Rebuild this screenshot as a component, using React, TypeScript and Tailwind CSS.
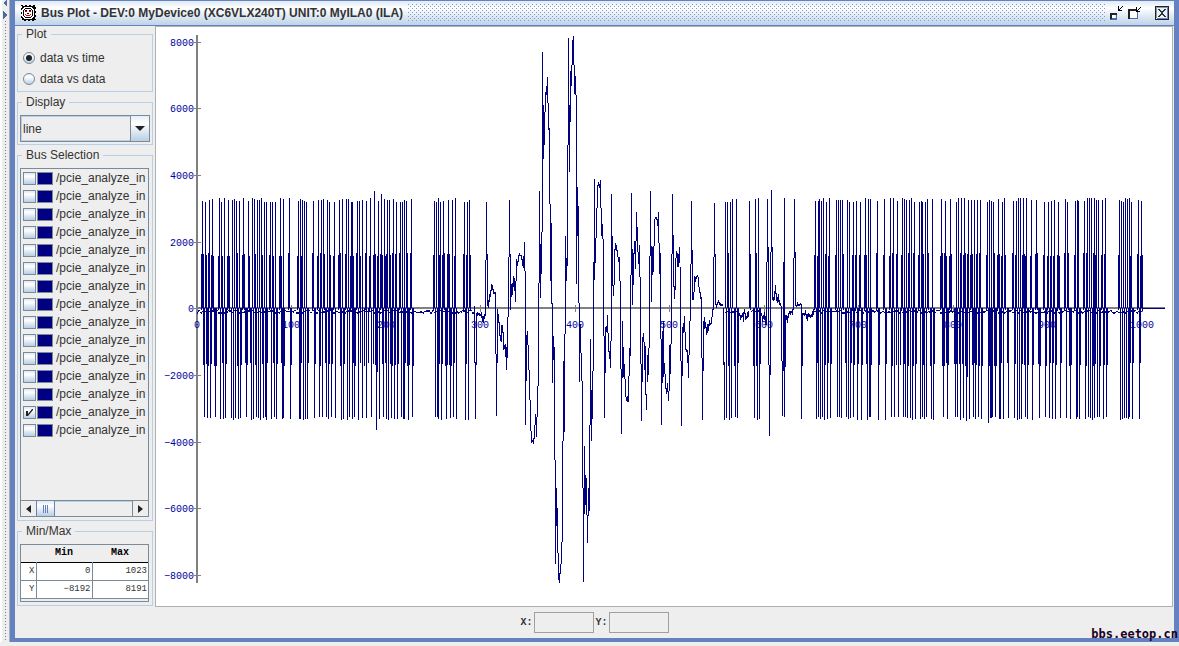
import React, { useState } from "react";

const BUS_COUNT = 15;

const Y_TICKS = [8000, 6000, 4000, 2000, 0, -2000, -4000, -6000, -8000];
const X_TICKS = [0, 100, 200, 300, 400, 500, 600, 700, 800, 900, 1000];

const AXIS_X = 197;
const AXIS_Y = 308;

// columns that reach the full positive swing
const PEAKS = [
  202, 205, 209, 212, 219, 221, 224, 228, 232, 234, 236, 239, 243, 248, 252, 254, 257, 259, 261, 264, 266, 270, 272,
  275, 280, 283, 289, 298, 300, 302, 304, 306, 313, 318, 321, 323, 327, 329, 334, 339, 342, 346, 348, 351, 352, 357,
  359, 362, 366, 370, 378, 384, 387, 389, 393, 396, 400, 402, 404, 406, 411, 434, 436, 438, 440, 443, 448, 452, 455,
  464, 467, 469, 725, 727, 730, 732, 736, 749, 755, 758, 815, 818, 819, 821, 823, 826, 829, 836, 838, 840, 842, 847,
  849, 853, 856, 860, 865, 868, 870, 877, 884, 890, 893, 897, 902, 904, 906, 909, 911, 914, 919, 921, 922, 925, 927,
  932, 941, 945, 950, 956, 958, 961, 964, 968, 971, 974, 977, 980, 987, 989, 991, 993, 998, 1002, 1004, 1013, 1016,
  1018, 1020, 1023, 1026, 1031, 1036, 1044, 1048, 1051, 1054, 1058, 1065, 1067, 1075, 1077, 1078, 1084, 1087, 1089,
  1091, 1094, 1096, 1098, 1102, 1105, 1119, 1121, 1123, 1125, 1127, 1129, 1131, 1138, 1141,
];

// columns that reach the full negative swing
const DIPS = [
  204, 207, 210, 215, 220, 223, 225, 231, 233, 235, 238, 240, 246, 251, 253, 256, 258, 260, 263, 265, 266, 271, 274,
  276, 282, 283, 290, 299, 300, 303, 305, 307, 314, 319, 322, 326, 328, 331, 335, 341, 343, 347, 349, 352, 354, 358,
  362, 366, 371, 379, 383, 386, 388, 391, 394, 397, 401, 403, 404, 408, 412, 435, 437, 438, 441, 446, 450, 453, 456,
  465, 468, 726, 729, 731, 735, 737, 754, 757, 759, 816, 818, 820, 822, 824, 827, 830, 837, 839, 841, 846, 848, 850,
  853, 857, 861, 867, 869, 870, 878, 885, 891, 894, 898, 903, 905, 907, 910, 912, 915, 920, 922, 924, 926, 931, 933,
  943, 947, 955, 957, 960, 963, 969, 973, 975, 978, 981, 991, 995, 999, 990, 992, 1000, 1003, 1008, 1014, 1017, 1019,
  1021, 1025, 1027, 1032, 1039, 1045, 1049, 1052, 1055, 1060, 1066, 1070, 1076, 1077, 1079, 1085, 1088, 1090, 1092,
  1094, 1097, 1099, 1103, 1106, 1120, 1122, 1124, 1126, 1128, 1129, 1132, 1139,
];

const HALF_PEAKS = [
  201, 203, 206, 208, 211, 213, 218, 222, 227, 229, 237, 242, 244, 249, 255, 262, 269, 273, 279, 281, 288, 297, 301,
  312, 317, 320, 324, 330, 333, 338, 340, 345, 350, 353, 356, 360, 365, 369, 373, 375, 377, 380, 382, 385, 386, 390,
  392, 395, 399, 407, 410, 433, 439, 442, 444, 447, 449, 454, 463, 466, 470, 728, 750, 756, 814, 817, 825, 828, 835,
  843, 852, 855, 859, 864, 866, 876, 883, 889, 892, 896, 901, 908, 913, 918, 923, 928, 940, 942, 944, 946, 949, 951,
  960, 963, 965, 967, 970, 972, 976, 979, 986, 994, 997, 999, 1001, 1005, 1012, 1015, 1022, 1024, 1025, 1030, 1035,
  1037, 1043, 1047, 1050, 1053, 1057, 1059, 1064, 1068, 1074, 1083, 1086, 1093, 1095, 1101, 1104, 1118, 1130, 1137,
  1140, 1142,
];

const HALF_DIPS = [
  203, 206, 208, 211, 214, 216, 222, 226, 237, 241, 245, 247, 250, 255, 262, 267, 273, 277, 281, 284, 291, 301, 308,
  315, 320, 325, 329, 332, 340, 344, 353, 355, 360, 364, 368, 373, 375, 382, 385, 390, 392, 395, 398, 405, 407, 409,
  413, 439, 442, 445, 447, 449, 451, 454, 466, 723, 728, 734, 738, 753, 756, 760, 817, 825, 828, 831, 845, 851, 854,
  858, 862, 866, 871, 879, 886, 892, 896, 900, 904, 908, 913, 916, 923, 930, 934, 942, 944, 946, 948, 954, 956, 959,
  962, 965, 972, 974, 976, 979, 982, 989, 992, 994, 996, 991, 1001, 1007, 1015, 1022, 1024, 1028, 1033, 1038, 1040,
  1046, 1050, 1053, 1056, 1061, 1069, 1071, 1077, 1080, 1086, 1093, 1095, 1100, 1104, 1107, 1130, 1133, 1140,
];

// [x, top, bottom] of the columns that stand out of the regular pattern
const COLUMNS: [number, number, number][] = [
  [374, 191, 308], [376, 308, 430], [377, 259, 372], [381, 194, 308], [966, 308, 421], [967, 269, 377], [988, 308, 423],
  [474, 306, 363], [475, 362, 419], [476, 313, 365], [477, 312, 316], [478, 313, 315], [479, 313, 316], [480, 314, 316],
  [481, 312, 318], [482, 316, 322], [483, 316, 323], [484, 314, 319], [485, 260, 316], [486, 202, 260], [487, 254, 306],
  [488, 300, 308], [489, 294, 302], [490, 290, 297], [491, 284, 291], [492, 285, 290], [493, 289, 294], [494, 292, 294],
  [495, 292, 354], [496, 354, 416], [497, 309, 363], [498, 314, 323], [499, 322, 336], [500, 335, 341], [501, 325, 342],
  [502, 325, 333], [503, 332, 350], [504, 345, 349], [505, 344, 357], [506, 347, 370], [507, 317, 358], [508, 257, 317],
  [509, 200, 257], [510, 254, 310], [511, 284, 297], [512, 283, 295], [513, 276, 287], [514, 278, 291], [515, 281, 302],
  [516, 259, 281], [517, 261, 266], [518, 255, 262], [519, 253, 256], [520, 255, 256], [521, 255, 260], [522, 259, 266],
  [523, 256, 268], [524, 242, 271], [525, 271, 425], [526, 335, 381], [527, 331, 345], [528, 345, 370], [529, 370, 400],
  [530, 400, 431], [531, 431, 443], [532, 440, 442], [533, 438, 444], [534, 425, 439], [535, 414, 425], [536, 417, 437],
  [537, 386, 417], [538, 283, 386], [539, 191, 283], [540, 244, 298], [541, 232, 274], [542, 52, 232], [543, 105, 159],
  [544, 112, 145], [545, 92, 112], [546, 86, 95], [547, 77, 103], [548, 103, 130], [549, 128, 204], [550, 204, 281],
  [551, 223, 304], [552, 303, 383], [553, 336, 360], [554, 347, 460], [555, 460, 564], [556, 488, 526], [557, 508, 553],
  [558, 553, 580], [559, 573, 583], [560, 564, 574], [561, 542, 564], [562, 441, 542], [563, 361, 441], [564, 334, 432],
  [565, 236, 334], [566, 258, 281], [567, 145, 266], [568, 38, 145], [569, 105, 172], [570, 71, 122], [571, 65, 86],
  [572, 40, 65], [573, 36, 65], [574, 65, 94], [575, 76, 95], [576, 95, 284], [577, 187, 236], [578, 206, 303],
  [579, 303, 382], [580, 324, 353], [581, 353, 381], [582, 381, 488], [583, 488, 582], [584, 446, 514], [585, 475, 505],
  [586, 478, 515], [587, 515, 543], [588, 488, 516], [589, 425, 511], [590, 339, 425], [591, 390, 441], [592, 371, 419],
  [593, 262, 371], [594, 179, 280], [595, 238, 263], [596, 208, 238], [597, 185, 208], [598, 182, 186], [599, 184, 188],
  [600, 180, 208], [601, 208, 236], [602, 224, 239], [603, 239, 336], [604, 336, 418], [605, 327, 373], [606, 326, 332],
  [607, 315, 333], [608, 333, 352], [609, 351, 359], [610, 341, 368], [611, 194, 341], [612, 236, 286], [613, 285, 296],
  [614, 249, 285], [615, 243, 250], [616, 245, 251], [617, 250, 257], [618, 257, 262], [619, 257, 281], [620, 281, 369],
  [621, 369, 434], [622, 321, 378], [623, 347, 377], [624, 364, 379], [625, 379, 397], [626, 397, 401], [627, 396, 402],
  [628, 376, 402], [629, 348, 376], [630, 275, 356], [631, 193, 275], [632, 249, 305], [633, 253, 285], [634, 241, 254],
  [635, 241, 269], [636, 212, 241], [637, 227, 252], [638, 252, 264], [639, 245, 277], [640, 277, 364], [641, 364, 421],
  [642, 337, 382], [643, 333, 342], [644, 342, 370], [645, 346, 395], [646, 394, 410], [647, 355, 382], [648, 348, 375],
  [649, 256, 348], [650, 191, 256], [651, 246, 302], [652, 247, 275], [653, 246, 272], [654, 219, 246], [655, 217, 219],
  [656, 217, 220], [657, 219, 226], [658, 212, 243], [659, 243, 274], [660, 253, 339], [661, 339, 425], [662, 331, 383],
  [663, 321, 377], [664, 363, 374], [665, 374, 389], [666, 388, 394], [667, 383, 392], [668, 391, 401], [669, 345, 391],
  [670, 344, 374], [671, 254, 344], [672, 194, 254], [673, 235, 287], [674, 286, 299], [675, 258, 290], [676, 251, 258],
  [677, 253, 267], [678, 254, 267], [679, 247, 263], [680, 267, 361], [681, 361, 426], [682, 327, 376], [683, 323, 333],
  [684, 316, 332], [685, 332, 350], [686, 349, 352], [687, 350, 363], [688, 355, 378], [689, 321, 355], [690, 264, 321],
  [691, 201, 264], [692, 250, 300], [693, 292, 300], [694, 276, 292], [695, 277, 282], [696, 276, 279], [697, 275, 277],
  [698, 277, 287], [699, 287, 293], [700, 292, 299], [701, 297, 358], [702, 358, 420], [703, 321, 371], [704, 317, 329],
  [705, 322, 328], [706, 327, 335], [707, 324, 333], [708, 324, 331], [709, 320, 326], [710, 323, 325], [711, 317, 324],
  [712, 309, 317], [713, 257, 310], [714, 203, 257], [715, 254, 305], [716, 304, 308], [717, 302, 305], [718, 300, 303],
  [719, 302, 305], [720, 303, 306], [721, 304, 306], [722, 304, 306], [724, 362, 420],
  [739, 313, 316], [740, 315, 320], [741, 315, 318], [742, 313, 317], [743, 312, 322], [744, 309, 314], [745, 313, 320],
  [746, 316, 319], [747, 312, 318], [748, 311, 317], [761, 313, 316], [762, 316, 322], [763, 315, 319], [764, 312, 320],
  [765, 316, 325], [766, 262, 325], [767, 199, 262], [768, 247, 365], [769, 365, 436], [770, 252, 375], [771, 190, 252],
  [772, 247, 300], [773, 297, 301], [774, 291, 300], [775, 285, 294], [776, 293, 301], [777, 297, 303], [778, 294, 302],
  [779, 300, 305], [780, 303, 306], [781, 306, 361], [782, 361, 416], [783, 262, 371], [784, 198, 417], [785, 315, 367],
  [786, 315, 320], [787, 316, 323], [788, 313, 318], [789, 311, 314], [790, 311, 315], [791, 311, 313], [792, 309, 315],
  [793, 258, 310], [794, 199, 258], [795, 252, 306], [796, 305, 307], [797, 302, 306], [798, 304, 306], [799, 304, 306],
  [800, 303, 305], [801, 304, 419], [802, 313, 366], [803, 313, 315], [804, 313, 316], [805, 310, 315], [806, 314, 319],
  [807, 314, 321], [808, 313, 317], [809, 314, 317], [810, 315, 318], [811, 314, 317], [812, 311, 317], [813, 309, 315],
];

// [from, to] stretches where the trace only idles around zero
const IDLE = [
  [197, 473],
  [725, 737],
  [751, 760],
  [814, 1142],
];

const jitter = (x: number, range: number) => (x * 7919 + ((x * x) % 13)) % range;

const yTick = (v: number) => Math.round(AXIS_Y + 0.4 - v / 30);
const xTick = (v: number) => Math.floor(AXIS_X + v * 0.945);

function tracePath() {
  const seg = (x: number, top: number, bottom: number) => `M${x + 0.5} ${top}V${bottom}`;
  const parts: string[] = [];
  PEAKS.forEach((x) => parts.push(seg(x, 198 + jitter(x, 5), AXIS_Y)));
  DIPS.forEach((x) => parts.push(seg(x, AXIS_Y, 420 - jitter(x, 4))));
  HALF_PEAKS.forEach((x) => parts.push(seg(x, 253 + jitter(x, 4), AXIS_Y + 2)));
  HALF_DIPS.forEach((x) => parts.push(seg(x, AXIS_Y, 366 - jitter(x, 4))));
  COLUMNS.forEach(([x, top, bottom]) => parts.push(seg(x, top, bottom)));
  IDLE.forEach(([from, to]) => {
    for (let x = from; x <= to; x++) {
      const top = 310 + jitter(x >> 1, 3);
      parts.push(seg(x, top, top + 1 + jitter(x, 2)));
    }
  });
  return parts.join("");
}

const TRACE = tracePath();

function Chart() {
  return (
    <svg
      viewBox="156 27 1016 579"
      className="block h-full w-full"
      role="img"
      aria-label="Bus plot"
      shapeRendering="crispEdges"
    >
      <g fill="#808080">
        <rect x="196" y="35" width="2" height="548" />
        <rect x="197" y="307" width="968" height="2" />
        {Y_TICKS.map((v) => (
          <rect key={v} x="194" y={yTick(v)} width="7" height="1" />
        ))}
        {X_TICKS.map((v) => (
          <rect key={v} x={xTick(v)} y="305" width="1" height="7" />
        ))}
      </g>
      <g fill="#0000a0" className="font-['Liberation_Mono',monospace] text-[10px]">
        {Y_TICKS.map((v) => (
          <text key={v} x="194" y={yTick(v) + 4} textAnchor="end">
            {v < 0 ? `−${-v}` : v}
          </text>
        ))}
        {X_TICKS.map((v) => (
          <text key={v} x={xTick(v)} y="328" textAnchor="middle">
            {v}
          </text>
        ))}
      </g>
      <path d={TRACE} stroke="#000080" fill="none" />
      <rect x="1142" y="308" width="23" height="1" fill="#000080" />
    </svg>
  );
}

function Group({ title, className, children }: { title: string; className?: string; children: React.ReactNode }) {
  return (
    <fieldset className={`min-w-0 border border-[#b8cfe5] px-0.5 pt-[5px] pb-0.5 ${className ?? ""}`}>
      <legend className="ml-0.5 px-1 leading-4">{title}</legend>
      {children}
    </fieldset>
  );
}

function AppIcon() {
  return (
    <svg viewBox="0 0 16 16" className="h-4 w-4 shrink-0" shapeRendering="crispEdges">
      <rect x="1" y="1" width="14" height="14" fill="#fff" />
      <path
        d="M1 0h2v1h2v-1h2v1h2v-1h2v1h2v-1h2v2h1v2h-1v2h1v2h-1v2h1v2h-1v2h1v1h-2v1h-2v-1h-2v1h-2v-1h-2v1h-2v-1h-2v-2h-1v-2h1v-2h-1v-2h1v-2h-1v-2h1v-2h-1v-1h1zM4 2h8v1h1v1h1v8h-1v1h-1v1h-8v-1h-1v-1h-1v-8h1v-1h1z"
        fill="#000"
        fillRule="evenodd"
      />
      <path
        d="M5 3h6v1h-6zM3 5h1v6h-1zM12 5h1v6h-1zM4 4h1v1h-1zM11 4h1v1h-1zM5 12h6v1h-6zM4 11h1v1h-1zM11 11h1v1h-1z"
        fill="#000"
      />
      <path d="M5 6h2v1h-2zM9 6h2v1h-2zM5 9h1v1h4v-1h1v1h-1v1h-4v-1h-1z" fill="#e00000" />
      <path d="M5 5h2v1h-2zM9 5h2v1h-2zM7 8h2v1h-2z" fill="#000" />
    </svg>
  );
}

function TitleBar() {
  return (
    <header className="flex h-[25px] items-center border-b border-[#6382bf] bg-linear-to-b from-[#dfe9f4] via-white via-30% to-[#bdd2e8] pr-1 pl-[5px]">
      <AppIcon />
      <h1 className="ml-[5px] text-[12px] font-bold whitespace-nowrap text-[#333]">
        Bus Plot - DEV:0 MyDevice0 (XC6VLX240T) UNIT:0 MyILA0 (ILA)
      </h1>
      <svg className="ml-[5px] h-[18px] min-w-0 flex-1" shapeRendering="crispEdges">
        <defs>
          <pattern id="bumps" width="4" height="4" patternUnits="userSpaceOnUse">
            <rect x="0" y="0" width="1" height="1" fill="#7f9bcb" />
            <rect x="2" y="2" width="1" height="1" fill="#7f9bcb" />
          </pattern>
        </defs>
        <rect width="100%" height="100%" fill="url(#bumps)" />
      </svg>
      <div className="ml-1 flex shrink-0 items-center">
        <button type="button" aria-label="Minimize" className="h-4 w-4">
          <svg viewBox="0 0 16 16" className="h-4 w-4" shapeRendering="crispEdges">
            <path d="M1 8h7v2h-5v4h-2z" fill="#222" />
            <path d="M3 13h4v-3h1v5h-7v-1h2z" fill="#4a6ba8" />
            <path d="M3 10h3v3h-3z" fill="#fff" />
            <path d="M9 1h1v3h1v-1h1v-1h1v-1h1v1h-1v1h-1v1h-1v1h2v1h-4z" fill="#000" />
          </svg>
        </button>
        <button type="button" aria-label="Maximize" className="ml-[3px] h-4 w-4">
          <svg viewBox="0 0 16 16" className="h-4 w-4" shapeRendering="crispEdges">
            <path d="M0 4h8v2h-6v8h-2z" fill="#222" />
            <path d="M2 6h7v7h-7z" fill="#fff" />
            <path d="M0 14h10v-7h-1v6h-7v1h-2z" fill="#4a6ba8" />
            <path d="M8 2h1v3h1v-1h1v-1h1v-1h1v1h-1v1h-1v1h-1v1h2v1h-4z" fill="#000" />
          </svg>
        </button>
        <button type="button" aria-label="Close" className="ml-[10px] h-4 w-4">
          <svg viewBox="0 0 16 16" className="h-4 w-4" shapeRendering="crispEdges" fill="none">
            <rect x="1.500" y="1.500" width="13" height="13" fill="#e8f0f8" stroke="#222" />
            <path d="M2.500 13.500h11v-11" stroke="#6382bf" />
            <path d="M2.500 13v-10.500h11" stroke="#8a97ad" />
            <path
              d="M4 4h2v1h1v1h2v-1h1v-1h2v1h-1v1h-1v1h-1v2h1v1h1v1h1v1h-2v-1h-1v-1h-2v1h-1v1h-2v-1h1v-1h1v-1h1v-2h-1v-1h-1v-1h-1z"
              fill="#333"
            />
          </svg>
        </button>
      </div>
    </header>
  );
}

function BusList() {
  const [checked, setChecked] = useState<number[]>([13]);

  const toggle = (i: number) =>
    setChecked((prev) => (prev.includes(i) ? prev.filter((n) => n !== i) : [...prev, i]));

  return (
    <div className="mr-px mb-px flex flex-1 flex-col overflow-hidden border border-[#7a8a99]">
      <ul className="flex-1">
        {Array.from({ length: BUS_COUNT }, (_, i) => (
          <li key={i} className="h-[18px]">
            <label className="flex h-[18px] items-center pl-0.5 whitespace-nowrap">
              <input
                type="checkbox"
                checked={checked.includes(i)}
                onChange={() => toggle(i)}
                className="peer h-[13px] w-[13px] shrink-0 appearance-none border border-[#7a8a99] bg-linear-to-b from-[#dde8f3] via-white via-30% to-[#b8cfe5]"
              />
              <svg viewBox="0 0 13 13" className="-ml-[13px] hidden h-[13px] w-[13px] shrink-0 peer-checked:block">
                <path d="M3 5h2v3l4-5h1v1l-5 6h-2z" fill="#222" />
              </svg>
              <span className="ml-px h-[13px] w-4 shrink-0 border border-[#7a8a99] bg-[#000080]" />
              <span className="ml-[3px]">/pcie_analyze_in</span>
            </label>
          </li>
        ))}
      </ul>
      <div className="flex h-4 border-t border-[#7a8a99]">
        <button type="button" aria-label="Scroll left" className="flex w-[15px] items-center justify-center">
          <svg viewBox="0 0 5 8" className="h-2 w-[5px]">
            <path d="M5 0v8L0 4z" fill="#222" />
          </svg>
        </button>
        <div className="flex w-[19px] items-center justify-center gap-px border-x border-[#6382bf] bg-linear-to-b from-[#dde8f3] via-white via-30% to-[#b8cfe5]">
          <span className="h-2 w-px bg-[#6382bf]" />
          <span className="h-2 w-px bg-[#6382bf]" />
          <span className="h-2 w-px bg-[#6382bf]" />
        </div>
        <div className="flex-1 border-t border-[#b8cfe5]" />
        <button
          type="button"
          aria-label="Scroll right"
          className="flex w-4 items-center justify-center border-l border-[#7a8a99]"
        >
          <svg viewBox="0 0 5 8" className="h-2 w-[5px]">
            <path d="M0 0v8l5-4z" fill="#222" />
          </svg>
        </button>
      </div>
    </div>
  );
}

function MinMaxTable() {
  return (
    <div className="mr-px mb-px h-[58px] border border-[#7a8a99]">
      <table className="w-full table-fixed border-collapse border-b border-[#7a8a99] font-['Liberation_Mono',monospace] text-[9px] leading-none">
        <thead>
          <tr className="h-[17px] border-b border-black text-[10px] text-black">
            <th className="w-[15px]" />
            <th className="font-bold">Min</th>
            <th className="font-bold">Max</th>
          </tr>
        </thead>
        <tbody className="bg-white text-right">
          <tr className="h-[18px] border-b border-[#7a8a99]">
            <th className="border-r border-[#7a8a99] pr-px text-right font-normal">X</th>
            <td className="border-r border-[#7a8a99] pr-px">0</td>
            <td className="pr-px">1023</td>
          </tr>
          <tr className="h-[18px]">
            <th className="border-r border-[#7a8a99] pr-px text-right font-normal">Y</th>
            <td className="border-r border-[#7a8a99] pr-px">−8192</td>
            <td className="pr-px">8191</td>
          </tr>
        </tbody>
      </table>
    </div>
  );
}

function SidePanel() {
  const [mode, setMode] = useState("time");

  return (
    <aside className="flex w-[140px] shrink-0 flex-col gap-0.5 pr-0.5 pb-px pl-0.5 text-[12px] text-[#333]">
      <Group title="Plot">
        {["time", "data"].map((m) => (
          <label key={m} className="flex h-[21px] items-center gap-[5px] pl-[3px]">
            <input
              type="radio"
              name="plot"
              checked={mode === m}
              onChange={() => setMode(m)}
              className="flex h-3 w-3 shrink-0 appearance-none items-center justify-center rounded-full border border-[#7a8a99] bg-linear-to-b from-[#e6eef6] via-white via-30% to-[#b8cfe5] checked:before:h-1.5 checked:before:w-1.5 checked:before:rounded-full checked:before:bg-[#222]"
            />
            data vs {m}
          </label>
        ))}
      </Group>
      <Group title="Display">
        <div className="relative flex h-[27px] border border-[#7a8a99]">
          <select
            aria-label="Display"
            className="w-full appearance-none border border-[#b8cfe5] pl-px text-[12px] outline-none"
            defaultValue="line"
          >
            <option>line</option>
            <option>point</option>
          </select>
          <span className="pointer-events-none absolute inset-y-0 right-0 flex w-[19px] items-center justify-center border-l border-[#7a8a99] bg-linear-to-b from-[#e6eef6] via-white via-30% to-[#b8cfe5]">
            <svg viewBox="0 0 10 5" className="h-[5px] w-[10px]">
              <path d="M0 0h10L5 5z" fill="#222" />
            </svg>
          </span>
        </div>
      </Group>
      <Group title="Bus Selection" className="flex flex-1 flex-col">
        <BusList />
      </Group>
      <Group title="Min/Max">
        <MinMaxTable />
      </Group>
    </aside>
  );
}

function Divider() {
  return (
    <div className="flex w-[10px] shrink-0 flex-col border-r border-[#b0b0b0] border-l-2 border-l-white">
      <svg className="min-h-0 w-full flex-1" shapeRendering="crispEdges">
        <defs>
          <pattern id="grip" width="7" height="3" patternUnits="userSpaceOnUse">
            <rect x="3" y="0" width="1" height="1" fill="#6b7f9b" />
          </pattern>
        </defs>
        <rect y="20" width="7" height="100%" fill="url(#grip)" />
        <path d="M5 0v7L1 3z" fill="#4a6ba8" />
        <path d="M1 11v8l4-4z" fill="#4a6ba8" />
      </svg>
    </div>
  );
}

export default function App() {
  return (
    <div className="flex h-screen min-h-[600px] overflow-hidden bg-[#eee] pb-1 font-['Liberation_Sans',Arial,sans-serif] text-[#333]">
      <Divider />
      <div className="relative flex min-w-0 flex-1 flex-col border-x-[5px] border-t border-b-4 border-[#6382bf]">
        <TitleBar />
        <div className="flex min-h-0 flex-1">
          <SidePanel />
          <main className="mr-px min-w-0 flex-1 border border-[#b0b0b0] bg-white">
            <Chart />
          </main>
        </div>
        <footer className="flex h-[31px] items-center justify-center gap-0.5 font-['Liberation_Mono',monospace] text-[10px] font-bold">
          <label className="flex items-center gap-px">
            X:
            <input readOnly className="h-[21px] w-[60px] border border-[#a0a0a0] px-1" />
          </label>
          <label className="flex items-center gap-px">
            Y:
            <input readOnly className="h-[21px] w-[60px] border border-[#a0a0a0] px-1" />
          </label>
        </footer>
        <span className="absolute -right-1 -bottom-1 font-['DejaVu_Sans_Mono',monospace] text-[12px] leading-4 font-bold text-[#1a0022]">
          bbs.eetop.cn
        </span>
      </div>
    </div>
  );
}
